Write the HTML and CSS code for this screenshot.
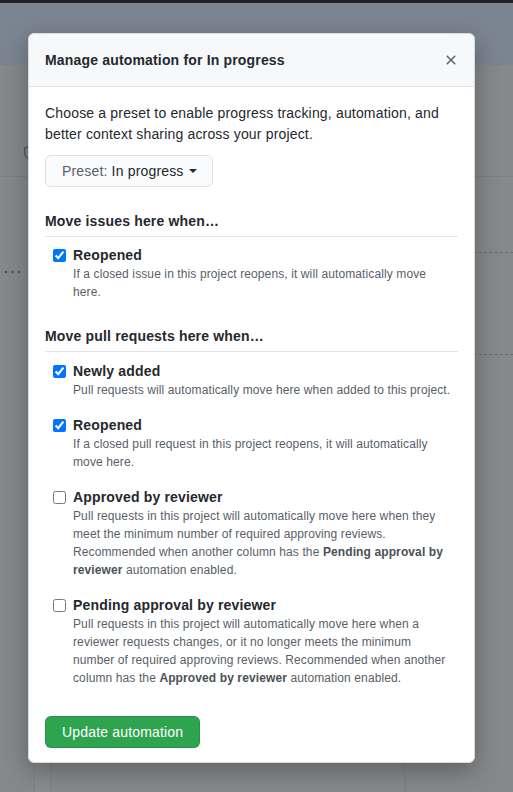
FILE: index.html
```html
<!DOCTYPE html>
<html lang="en">
<head>
<meta charset="utf-8">
<title>Manage automation</title>
<link rel="stylesheet" href="styles.css">
</head>
<body>
<div class="page">
  <div class="topbar"></div>
  <div class="repo-header"></div>
  <div class="toolbar">
    <svg class="shield" width="16" height="16" viewBox="0 0 16 16"><path d="M8 1.2 2.6 3v4.3c0 3.4 2.3 6 5.4 7.5 3.1-1.5 5.4-4.1 5.4-7.5V3L8 1.2z" fill="none" stroke="#55585c" stroke-width="1.4" stroke-linejoin="round"/></svg>
  </div>
  <div class="board">
    <div class="lane-stub">
      <svg width="18" height="4" viewBox="0 0 18 4"><circle cx="2" cy="2" r="1.3" fill="#4f5256"/><circle cx="8.5" cy="2" r="1.3" fill="#4f5256"/><circle cx="15" cy="2" r="1.3" fill="#4f5256"/></svg>
    </div>
    <div class="lane">
      <div class="lane-card"></div>
    </div>
    <div class="lane-right">
      <div class="dash dash-1"></div>
      <div class="dash dash-2"></div>
    </div>
  </div>
</div>

<div class="dialog" role="dialog">
  <div class="dialog-header">
    <h1 class="dialog-title">Manage automation for In progress</h1>
    <button class="close-btn" aria-label="Close">
      <svg width="16" height="16" viewBox="0 0 16 16"><path fill="#586069" d="M3.72 3.72a.75.75 0 011.06 0L8 6.94l3.22-3.220a.75.75 0 111.06 1.06L9.06 8l3.22 3.22a.75.75 0 11-1.06 1.06L8 9.06l-3.22 3.22a.75.75 0 01-1.06-1.06L6.94 8 3.72 4.78a.75.75 0 010-1.06z"/></svg>
    </button>
  </div>
  <div class="dialog-body">
    <p class="intro">Choose a preset to enable progress tracking, automation, and better context sharing across your project.</p>
    <button class="preset-btn"><span class="muted">Preset:</span> In progress<span class="caret"></span></button>

    <section class="section">
      <h2 class="section-title">Move issues here when…</h2>
      <div class="items">
        <label class="item">
          <input type="checkbox" checked>
          <span class="item-text">
            <span class="item-label">Reopened</span>
            <span class="note">If a closed issue in this project reopens, it will automatically move here.</span>
          </span>
        </label>
      </div>
    </section>

    <section class="section">
      <h2 class="section-title">Move pull requests here when…</h2>
      <div class="items">
        <label class="item">
          <input type="checkbox" checked>
          <span class="item-text">
            <span class="item-label">Newly added</span>
            <span class="note">Pull requests will automatically move here when added to this project.</span>
          </span>
        </label>
        <label class="item">
          <input type="checkbox" checked>
          <span class="item-text">
            <span class="item-label">Reopened</span>
            <span class="note">If a closed pull request in this project reopens, it will automatically move here.</span>
          </span>
        </label>
        <label class="item">
          <input type="checkbox">
          <span class="item-text">
            <span class="item-label">Approved by reviewer</span>
            <span class="note">Pull requests in this project will automatically move here when they meet the minimum number of required approving reviews. Recommended when another column has the <strong>Pending approval by reviewer</strong> automation enabled.</span>
          </span>
        </label>
        <label class="item">
          <input type="checkbox">
          <span class="item-text">
            <span class="item-label">Pending approval by reviewer</span>
            <span class="note">Pull requests in this project will automatically move here when a reviewer requests changes, or it no longer meets the minimum number of required approving reviews. Recommended when another column has the <strong>Approved by reviewer</strong> automation enabled.</span>
          </span>
        </label>
      </div>
    </section>

    <div class="dialog-footer">
      <button class="primary-btn">Update automation</button>
    </div>
  </div>
</div>
</body>
</html>
```

FILE: styles.css
```css
* { box-sizing: border-box; }

html, body {
  margin: 0;
  padding: 0;
}

body {
  width: 513px;
  height: 792px;
  overflow: hidden;
  background: #87888a;
  font-family: "Liberation Sans", Arial, sans-serif;
  font-size: 14px;
  letter-spacing: 0.17px;
  color: #24292e;
  position: relative;
}

/* ---------- dimmed page behind ---------- */
.page {
  display: flex;
  flex-direction: column;
  height: 792px;
}

.topbar {
  height: 3px;
  background: #1f2226;
}

.repo-header {
  height: 62px;
  background: #7b8591;
}

.toolbar {
  height: 112px;
  border-bottom: 1px solid #7d7f82;
  padding: 80px 0 0 22px;
}

.shield { display: block; }

.board {
  flex: 1;
  display: flex;
}

.lane-stub {
  width: 34px;
  padding: 93px 0 0 4px;
}

.lane-stub svg { display: block; }

.lane {
  width: 371px;
  border-left: 1px solid #7f8184;
  background: #8a8b8d;
  padding-left: 15px;
  display: flex;
}

.lane-card {
  flex: 1;
  background: #87898b;
  border-left: 1px solid #7f8184;
  border-right: 1px solid #7f8184;
}

.lane-right {
  margin-left: auto;
  width: 60px;
}

.dash {
  border-top: 1px dashed #696b6e;
}

.dash-1 { margin-top: 75px; }
.dash-2 { margin-top: 101px; }

/* ---------- dialog ---------- */
.dialog {
  position: absolute;
  left: 28px;
  top: 33px;
  width: 447px;
  background: #fff;
  border: 1px solid #d8dadd;
  border-radius: 6px;
  box-shadow: 0 8px 24px rgba(20, 22, 26, 0.35);
}

.dialog-header {
  display: flex;
  align-items: center;
  justify-content: space-between;
  padding: 16px;
  background: #f6f8fa;
  border-bottom: 1px solid #e1e4e8;
  border-radius: 6px 6px 0 0;
}

.dialog-title {
  margin: 0;
  font-size: 14px;
  line-height: 20px;
  font-weight: bold;
  color: #24292e;
}

.close-btn {
  border: 0;
  background: transparent;
  padding: 0;
  margin: 0 -1px 0 0;
  width: 16px;
  height: 16px;
  display: flex;
}

.dialog-body {
  padding: 16px 16px 14px;
}

.intro {
  margin: 0 0 10px;
  line-height: 21px;
}

.preset-btn {
  display: inline-flex;
  align-items: center;
  height: 32px;
  padding: 0 15px 0 16px;
  font-family: inherit;
  font-size: 14px;
  letter-spacing: inherit;
  line-height: 20px;
  color: #24292e;
  background: #fafbfc;
  border: 1px solid #dfe2e5;
  border-radius: 6px;
  white-space: pre;
}

.muted { color: #586069; }

.caret {
  display: inline-block;
  width: 0;
  height: 0;
  margin-left: 5px;
  border-top: 4px solid #24292e;
  border-left: 4px solid transparent;
  border-right: 4px solid transparent;
}

.section { margin-top: 24px; }
.section + .section { margin-top: 25px; }

.section-title {
  margin: 0;
  padding-bottom: 4px;
  font-size: 14px;
  line-height: 21px;
  font-weight: bold;
  border-bottom: 1px solid #e1e4e8;
}

.items {
  display: flex;
  flex-direction: column;
  gap: 16px;
  padding-top: 8px;
}

.section + .section .items { padding-top: 9px; }

.item {
  display: flex;
  align-items: flex-start;
  padding: 0 6px 0 8px;
}

.item input {
  width: 13px;
  height: 13px;
  margin: 4px 7px 0 0;
  flex: none;
}

.item-text {
  display: flex;
  flex-direction: column;
}

.item-label {
  font-weight: bold;
  line-height: 20px;
}

.note {
  font-size: 12px;
  letter-spacing: 0.11px;
  line-height: 18px;
  color: #586069;
}

.note strong { color: #4a5058; }

.dialog-footer {
  margin-top: 29px;
}

.primary-btn {
  height: 32px;
  padding: 0 16px;
  font-family: inherit;
  font-size: 14px;
  letter-spacing: inherit;
  color: #fff;
  background: #2ea44f;
  border: 1px solid rgba(27, 31, 35, 0.15);
  border-radius: 6px;
}
```
